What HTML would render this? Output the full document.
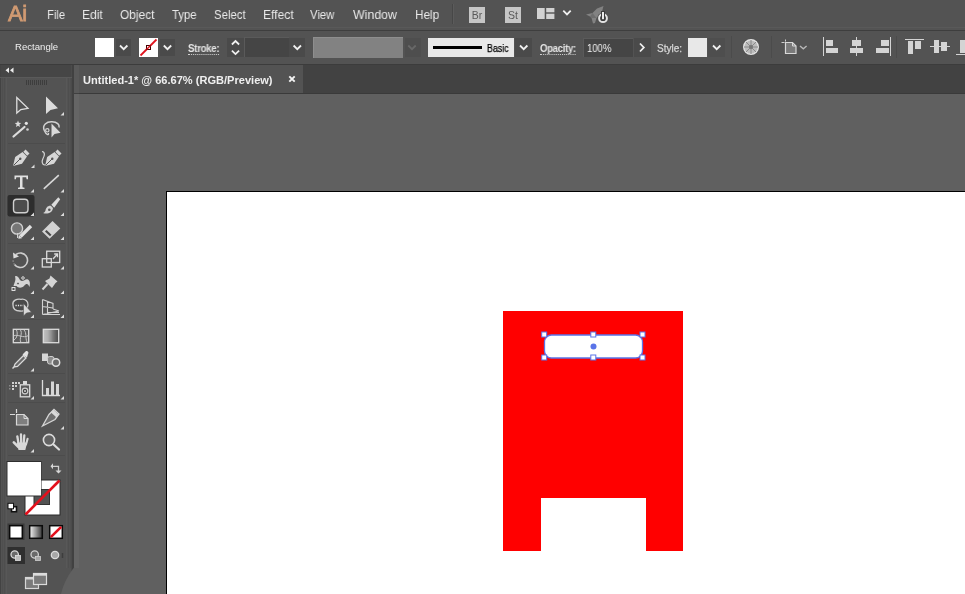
<!DOCTYPE html>
<html><head><meta charset="utf-8">
<style>
html,body{margin:0;padding:0;}
body{width:965px;height:594px;overflow:hidden;position:relative;background:#535353;font-family:"Liberation Sans",sans-serif;color:#e6e6e6;}
.abs{position:absolute;}
.menu,.lbl,.g{will-change:transform;}
#menubar{left:0;top:0;width:965px;height:30px;background:#535353;}
#menuline{left:0;top:30px;width:965px;height:1px;background:#3e3e3e;}
#menuline2{left:0;top:27px;width:965px;height:1px;background:#595959;}
#ctrl{left:0;top:31px;width:965px;height:33px;background:#535353;}
#ctrlline{left:0;top:64px;width:965px;height:1px;background:#3c3c3c;}
.menu{position:absolute;transform-origin:0 0;top:7px;font-size:13px;line-height:15px;color:#e9e9e9;white-space:nowrap;}
.lbl{position:absolute;transform-origin:0 0;top:44px;font-size:9.5px;line-height:12px;color:#e4e4e4;white-space:nowrap;font-weight:bold;letter-spacing:-0.3px}
#tabbar{left:74px;top:65px;width:891px;height:28px;background:#424242;}
#tab{left:74px;top:65px;width:229px;height:28px;background:#535353;}
#tabline{left:74px;top:93px;width:891px;height:1px;background:#3a3a3a;}
#canvas{left:74px;top:94px;width:891px;height:500px;background:#606060;}
#tools{left:0;top:65px;width:72px;height:529px;background:#535353;}
#toolhead{left:0;top:65px;width:72px;height:12px;background:#464646;}
#toolsep{left:72px;top:65px;width:2px;height:529px;background:#414141;box-shadow:-1px 0 0 #4b4b4b;}
#artboard{left:166px;top:191px;width:799px;height:403px;background:#fff;border-left:1px solid #000;border-top:1px solid #000;box-sizing:border-box;}

.btn{position:absolute;background:#4a4a4a;}
.fld{position:absolute;background:#454545;box-shadow:inset 1px 1px 0 #5a5a5a;}
.sw{position:absolute;}
.u{border-bottom:1px dotted #d0d0d0;padding-bottom:0px;line-height:10px}
svg.ic{position:absolute;overflow:visible}
</style></head><body>
<div class="abs" id="menubar"></div>
<div class="abs" id="menuline2"></div>
<div class="abs" id="menuline"></div>
<div class="abs" id="ctrl"></div>
<div class="abs" id="ctrlline"></div>
<div class="abs" id="tabbar"></div>
<div class="abs" id="tab"></div>
<div class="abs" id="tabline"></div>
<div class="abs" id="canvas"></div>
<div class="abs" id="tools"></div>
<div class="abs" id="toolhead"></div>
<div class="abs" id="toolsep"></div>
<div class="abs" style="left:74px;top:65px;width:5px;height:503px;background:rgba(255,255,255,0.035)"></div>
<div class="abs" id="artboard"></div>

<svg class="ic" style="left:288px;top:75px" width="8" height="8" viewBox="0 0 8 8"><path d="M1.300 1.300L6.700 6.700M6.700 1.300L1.300 6.700" stroke="#f4f4f4" stroke-width="1.900"/></svg>
<!-- tools panel -->
<svg class="ic" style="left:0;top:0" width="76" height="594" viewBox="0 0 76 594">
<path d="M74.500 567V594H61C63 585 67 577 72.500 569.500Z" fill="#606060"/>
<rect x="0" y="65" width="1" height="529" fill="#434343"/>
<g shape-rendering="crispEdges"><rect x="2" y="78" width="1" height="516" fill="#4f4f4f"/><rect x="4" y="78" width="1" height="516" fill="#4e4e4e"/><rect x="6" y="78" width="1" height="516" fill="#585858"/><rect x="66" y="78" width="1" height="490" fill="#585858"/><rect x="68" y="78" width="1" height="490" fill="#4e4e4e"/><rect x="70" y="78" width="1" height="490" fill="#4f4f4f"/></g>
<rect x="0" y="77" width="72" height="1" fill="#5a5a5a"/>
<!-- collapse arrows -->
<path d="M9 67.500v5.500l-3.500 -2.750zM13.500 67.500v5.500l-3.500 -2.750z" fill="#ececec"/>
<!-- gripper -->
<g stroke="#3d3d3d" stroke-width="1"><path d="M26.500 80v5M28.500 80v5M30.500 80v5M32.500 80v5M34.500 80v5M36.500 80v5M38.500 80v5M40.500 80v5M42.500 80v5M44.500 80v5M46.500 80v5"/></g>
<!-- separators -->
<g stroke="#4c4c4c" stroke-width="1"><path d="M8 143.500h57M8 243.500h57M8 319.500h57M8 373.500h57M8 402.500h57M8 455.500h57"/></g>
<!-- selected tool bg -->
<rect x="7.500" y="195" width="27" height="21.500" rx="2" fill="#2d2d2d"/>

<!-- selection tool -->
<path d="M16.800 97.500V113L20.800 109.500L28 108.300Z" fill="none" stroke="#dedede" stroke-width="1.300" stroke-linejoin="miter"/>
<!-- direct selection -->
<path d="M46 96.500V114L50.500 110L58 108.300Z" fill="#dcdcdc"/>
<path d="M64 112v3.5h-3.5z" fill="#dcdcdc"/>
<!-- magic wand -->
<path d="M13.500 136.500L24.500 127" stroke="#dcdcdc" stroke-width="2.200" stroke-linecap="round"/>
<path d="M18 120.500l0.900 2.300l2.300 0.300l-1.800 1.500l0.600 2.400l-2 -1.300l-2 1.300l0.600 -2.400l-1.800 -1.500l2.300 -0.300z" fill="#dcdcdc"/>
<circle cx="26.300" cy="123.300" r="1.600" fill="#e4e4e4"/><circle cx="27.500" cy="129.500" r="1.300" fill="#d0d0d0"/>
<!-- lasso -->
<path d="M44.500 131C41.500 125 47 121.500 52 121.800C57 122 60 124.500 59 127.500" fill="none" stroke="#d2d2d2" stroke-width="1.500"/>
<path d="M44.500 131C46 134.500 49 136 48.500 133" fill="none" stroke="#d2d2d2" stroke-width="1.300"/>
<circle cx="47.300" cy="130.300" r="1.700" fill="none" stroke="#d2d2d2" stroke-width="1.200"/>
<path d="M51.500 123.500V137.500L54.500 134L60.500 132.800Z" fill="#d8d8d8"/>
<!-- pen -->
<g>
 <path d="M13 166L15.200 157L22.500 152L27 156.500L22 163.800Z" fill="#d6d6d6"/>
 <path d="M23.300 151.800L25.600 149.500L29.500 153.400L27.200 155.700Z" fill="#d6d6d6"/>
 <path d="M13.500 165.500L20 159" stroke="#555" stroke-width="1"/><circle cx="20.300" cy="158.700" r="1.200" fill="#555"/>
</g>
<path d="M34.5 164.5v3.5h-3.5z" fill="#dcdcdc"/>
<!-- curvature -->
<g transform="translate(32,0)">
 <path d="M13 166L15.200 157L22.500 152L27 156.500L22 163.800Z" fill="#d6d6d6"/>
 <path d="M23.300 151.800L25.600 149.500L29.500 153.400L27.200 155.700Z" fill="#d6d6d6"/>
 <path d="M13.500 165.500L20 159" stroke="#555" stroke-width="1"/><circle cx="20.300" cy="158.700" r="1.200" fill="#555"/>
</g>
<path d="M42 151.500C45.500 152 44.500 156 43 158.500C41.500 161.500 42 165 45 165" fill="none" stroke="#d6d6d6" stroke-width="1.200"/>
<!-- type -->
<path d="M14.500 175.500H28V179.300H26.600L26.200 177.200H22.500V187.300L24.500 187.700V189H18V187.700L20 187.300V177.200H16.300L15.900 179.300H14.500Z" fill="#e0e0e0"/>
<path d="M34 189v3.5h-3.5z" fill="#dcdcdc"/>
<!-- line -->
<path d="M43.800 188.800L58.800 175.200" stroke="#d8d8d8" stroke-width="1.600"/>
<path d="M64 189v3.5h-3.5z" fill="#dcdcdc"/>
<!-- rounded rect -->
<rect x="13.500" y="199.300" width="14.500" height="13.400" rx="3.200" fill="#4c4c4c" stroke="#cfcfcf" stroke-width="1.400"/>
<path d="M34 212.5v3.5h-3.5z" fill="#dcdcdc"/>
<!-- paintbrush -->
<path d="M58.300 197.300L60.200 199.200L54.200 207.700L51.300 204.800Z" fill="#dcdcdc"/>
<path d="M50.800 205.800C47.500 205.500 46 208 45.500 210.500C45 212 44 212.800 43 213C47 214.500 52.500 213 53 208Z" fill="#d4d4d4"/>
<circle cx="49.300" cy="209.800" r="1.300" fill="#555"/>
<path d="M64 212.5v3.5h-3.5z" fill="#dcdcdc"/>
<!-- shaper -->
<circle cx="17" cy="228.500" r="5.600" fill="#767676" stroke="#d0d0d0" stroke-width="1.400"/>
<path d="M20.500 236.500L31 226" stroke="#e0e0e0" stroke-width="3.300"/>
<path d="M18.300 238.800L18.800 235L22 238.200Z" fill="#e0e0e0"/>
<path d="M17.500 233v5" stroke="#cfcfcf" stroke-width="1"/>
<path d="M34 236.5v3.5h-3.5z" fill="#dcdcdc"/>
<!-- eraser -->
<path d="M52.500 221L60.300 228.500L49.500 238.700L42 231.500Z" fill="#d2d2d2"/>
<path d="M46.500 230L51.500 234.800L50 236.200L45 231.400Z" fill="#4a4a4a"/>
<path d="M64 236.5v3.5h-3.5z" fill="#dcdcdc"/>
<!-- rotate -->
<path d="M16 254.500A7.200 7.200 0 1 1 14.500 264.500" fill="none" stroke="#cdcdcd" stroke-width="1.600"/>
<path d="M13 252.500L13.500 258.500L19 256.500Z" fill="#dcdcdc"/>
<path d="M14.500 264.500A7.200 7.200 0 0 1 13.200 259" fill="none" stroke="#8a8a8a" stroke-width="1.300" stroke-dasharray="1.500 1.500"/>
<path d="M34 266v3.5h-3.5z" fill="#dcdcdc"/>
<!-- scale -->
<rect x="46.700" y="251.200" width="13" height="11.300" fill="none" stroke="#dadada" stroke-width="1.300"/>
<rect x="42.300" y="258.700" width="9" height="8.300" fill="none" stroke="#dadada" stroke-width="1.300"/>
<path d="M53 259L57 254.500M54.200 254h3.300v3.300" fill="none" stroke="#dadada" stroke-width="1.300"/>
<path d="M64 266v3.5h-3.5z" fill="#dcdcdc"/>
<!-- width/warp -->
<path d="M13.500 286C15 281 16 280 15 276.500C17.500 275 18.500 278 20 280C23 283 25 278 28 279.500C30.500 281 30 285 29.500 287C28 283.500 26.500 283 24 286C21.500 288.500 18 288 16.500 286Z" fill="#d4d4d4"/>
<circle cx="18" cy="283.500" r="1.500" fill="#666" stroke="#eee" stroke-width=".8"/>
<circle cx="23" cy="278" r="1.300" fill="#666" stroke="#eee" stroke-width=".8"/>
<rect x="12" y="287.500" width="3" height="3" fill="#555" stroke="#eee" stroke-width=".9"/>
<path d="M34 290.5v3.5h-3.5z" fill="#dcdcdc"/>
<!-- pin -->
<path d="M50.500 275.500L57.500 281.500L55.500 283L52 288L45 281L49.500 278.500Z" fill="#d4d4d4"/>
<path d="M47.500 284L42.500 289.500" stroke="#d4d4d4" stroke-width="2"/>
<path d="M64 290.5v3.5h-3.5z" fill="#dcdcdc"/>
<!-- shape builder -->
<path d="M13 305C12 300.500 17 298.500 21 299.300C25 298.500 28.500 301.500 28 305C28 309 24 311.500 20 311C15.500 311 13 308.500 13 305Z" fill="#4a4a4a" stroke="#cfcfcf" stroke-width="1.300"/>
<path d="M15.500 305.500h8" stroke="#e8e8e8" stroke-width="1.300" stroke-dasharray="1.200 1.200"/>
<path d="M23.500 303.500V316L26.500 313L31.500 312.200Z" fill="#d8d8d8" stroke="#535353" stroke-width=".6"/>
<path d="M34 314.5v3.5h-3.5z" fill="#dcdcdc"/>
<!-- perspective grid -->
<path d="M42.500 299.500V314.500M42.500 299.500L53 303.500V309M42.500 306.500L53 308M47.500 301.500V313.500M42.500 314.500L59 311M53 309L59 311M44 314.500H60M48 312.500H59" fill="none" stroke="#d2d2d2" stroke-width="1.100"/>
<path d="M64 314.5v3.5h-3.5z" fill="#dcdcdc"/>
<!-- mesh -->
<rect x="13.300" y="329.300" width="15.400" height="13.400" fill="#5c5c5c" stroke="#dcdcdc" stroke-width="1.300"/>
<path d="M13.500 336C18 333.500 23 339 28.500 335.500M20 329.500C23.500 333 18.500 338.500 21 342.500M14 340C17 338 18 334 16.500 330M24 330C27 333 25 338 27 342" fill="none" stroke="#c6c6c6" stroke-width="1"/>
<!-- gradient -->
<rect x="43.30" y="329.3" width="1.40" height="13.4" fill="#d3d3d3"/><rect x="44.40" y="329.3" width="1.40" height="13.4" fill="#c9c9c9"/><rect x="45.50" y="329.3" width="1.40" height="13.4" fill="#bfbfbf"/><rect x="46.60" y="329.3" width="1.40" height="13.4" fill="#b4b4b4"/><rect x="47.70" y="329.3" width="1.40" height="13.4" fill="#aaaaaa"/><rect x="48.80" y="329.3" width="1.40" height="13.4" fill="#a0a0a0"/><rect x="49.90" y="329.3" width="1.40" height="13.4" fill="#969696"/><rect x="51.00" y="329.3" width="1.40" height="13.4" fill="#8c8c8c"/><rect x="52.10" y="329.3" width="1.40" height="13.4" fill="#828282"/><rect x="53.20" y="329.3" width="1.40" height="13.4" fill="#787878"/><rect x="54.30" y="329.3" width="1.40" height="13.4" fill="#6e6e6e"/><rect x="55.40" y="329.3" width="1.40" height="13.4" fill="#636363"/><rect x="56.50" y="329.3" width="1.40" height="13.4" fill="#595959"/><rect x="57.60" y="329.3" width="1.40" height="13.4" fill="#4f4f4f"/><rect x="43.3" y="329.3" width="15.4" height="13.4" fill="none" stroke="#dcdcdc" stroke-width="1.3"/>
<!-- eyedropper -->
<path d="M14 367L15 364L23.500 355.500L26 358L17.500 366.500Z" fill="#6a6a6a" stroke="#dadada" stroke-width="1.300"/>
<path d="M22.500 354.500L25.500 351.500C27 350 29.500 352.500 28 354L27 357.500Z" fill="#e2e2e2"/>
<path d="M12.500 368.500l1.500 -1.500" stroke="#dadada" stroke-width="1.500"/>
<path d="M34 368v3.5h-3.5z" fill="#dcdcdc"/>
<!-- blend -->
<rect x="42" y="353.500" width="6" height="7.500" fill="#d6d6d6"/>
<rect x="47.500" y="356.500" width="6.500" height="7.500" rx="2" fill="#8c8c8c" stroke="#d0d0d0" stroke-width="1"/>
<circle cx="56" cy="362.500" r="3.700" fill="#6a6a6a" stroke="#dedede" stroke-width="1.500"/>
<!-- symbol sprayer -->
<g fill="#d0d0d0"><rect x="12" y="382" width="2" height="2"/><rect x="15" y="382" width="2" height="2"/><rect x="18" y="382" width="2" height="2"/><rect x="12" y="385" width="2" height="2"/><rect x="15" y="385" width="2" height="2"/><rect x="12" y="388" width="2" height="2"/><rect x="9" y="385" width="1.500" height="1.500" fill="#8a8a8a"/><rect x="9" y="388" width="1.500" height="1.500" fill="#8a8a8a"/></g>
<rect x="20.300" y="384.800" width="9.400" height="12" fill="#5a5a5a" stroke="#dadada" stroke-width="1.300"/>
<rect x="23" y="381" width="4" height="3.500" fill="#dadada"/>
<circle cx="25" cy="391" r="2.800" fill="#444" stroke="#cfcfcf" stroke-width="1.200"/><circle cx="25" cy="391" r="1" fill="#d0d0d0"/>
<path d="M34 396v3.5h-3.5z" fill="#dcdcdc"/>
<!-- graph -->
<path d="M42.500 380V395.500H60" fill="none" stroke="#dcdcdc" stroke-width="1.300"/>
<rect x="46" y="388" width="3" height="7" fill="#d6d6d6"/><rect x="51" y="381.500" width="3" height="13.500" fill="#d6d6d6"/><rect x="56" y="384" width="3" height="11" fill="#d6d6d6"/>
<path d="M64 396v3.5h-3.5z" fill="#dcdcdc"/>
<!-- artboard -->
<path d="M16.500 414.500H24L28 418.500V425H16.500Z" fill="#7e7e7e" stroke="#dadada" stroke-width="1.200"/>
<path d="M24 414.500V418.500H28" fill="none" stroke="#dadada" stroke-width="1"/>
<path d="M10 414.500H15M16.500 409V413" stroke="#dadada" stroke-width="1.200"/>
<!-- slice -->
<path d="M42.500 426L49 414.500L54 409.500L59 414L55 419.500Z" fill="#6e6e6e" stroke="#d6d6d6" stroke-width="1.300"/>
<path d="M53.500 410L58.500 414.500L56.500 417.500L51 412.500Z" fill="#d8d8d8"/>
<path d="M64 426v3.5h-3.5z" fill="#dcdcdc"/>
<!-- hand -->
<g stroke="#d8d8d8" stroke-linecap="round" fill="none"><path d="M18.600 444L17.300 436.300" stroke-width="2.300"/><path d="M21.200 443L21 434.500" stroke-width="2.300"/><path d="M23.700 443L24.300 435.500" stroke-width="2.300"/><path d="M26 444.500L27.600 438.800" stroke-width="2.100"/><path d="M18.500 447L13.800 442.300" stroke-width="2.600"/></g>
<path d="M16.800 442.500L27.200 442.500L25.300 450L18.500 450Z" fill="#d8d8d8"/>
<path d="M34 449v3.5h-3.5z" fill="#dcdcdc"/>
<!-- zoom -->
<circle cx="49" cy="440" r="5.600" fill="#616161" stroke="#dcdcdc" stroke-width="1.600"/>
<path d="M53.300 444.300L59 449.500" stroke="#dcdcdc" stroke-width="2.200" stroke-linecap="round"/>

<!-- stroke swatch -->
<rect x="25" y="480" width="35" height="35" fill="#fff" stroke="#2a2a2a" stroke-width="1"/>
<rect x="34" y="489.500" width="15.500" height="15" fill="#535353" stroke="#333" stroke-width="1"/>
<path d="M25.500 514.500L59.500 480.500" stroke="#e3101c" stroke-width="2.600"/>
<!-- fill swatch -->
<rect x="6.500" y="461" width="35" height="35.500" fill="#2e2e2e"/>
<rect x="7.500" y="462" width="33.500" height="33.500" fill="#fff"/>
<!-- swap -->
<path d="M52.500 466.300H58.500V471.500" fill="none" stroke="#cfcfcf" stroke-width="1.300"/>
<path d="M53 463.300V469.300L50.500 466.300ZM55.500 470.500H61.500L58.500 473.500Z" fill="#d6d6d6"/>
<!-- default -->
<rect x="11.500" y="506.700" width="5" height="5" fill="#fff" stroke="#111" stroke-width="1.600"/>
<rect x="8" y="503.300" width="5.500" height="5.500" fill="#fff" stroke="#111" stroke-width="1"/>
<!-- color mode -->
<rect x="7.500" y="523.500" width="17" height="16.500" fill="#3a3a3a"/>
<rect x="9.700" y="525.700" width="12.600" height="12.600" fill="#fff" stroke="#0a0a0a" stroke-width="1.500"/>
<rect x="29.70" y="525.7" width="1.35" height="12.6" fill="#ececec"/><rect x="30.75" y="525.7" width="1.35" height="12.6" fill="#dddddd"/><rect x="31.80" y="525.7" width="1.35" height="12.6" fill="#cdcdcd"/><rect x="32.85" y="525.7" width="1.35" height="12.6" fill="#bebebe"/><rect x="33.90" y="525.7" width="1.35" height="12.6" fill="#aeaeae"/><rect x="34.95" y="525.7" width="1.35" height="12.6" fill="#9f9f9f"/><rect x="36.00" y="525.7" width="1.35" height="12.6" fill="#8f8f8f"/><rect x="37.05" y="525.7" width="1.35" height="12.6" fill="#808080"/><rect x="38.10" y="525.7" width="1.35" height="12.6" fill="#707070"/><rect x="39.15" y="525.7" width="1.35" height="12.6" fill="#616161"/><rect x="40.20" y="525.7" width="1.35" height="12.6" fill="#515151"/><rect x="41.25" y="525.7" width="1.35" height="12.6" fill="#424242"/><rect x="29.7" y="525.7" width="12.6" height="12.6" fill="none" stroke="#0a0a0a" stroke-width="1.5"/>
<rect x="49.700" y="525.700" width="12.600" height="12.600" fill="#fff" stroke="#0a0a0a" stroke-width="1.500"/>
<path d="M50.800 537.200L61.200 526.800" stroke="#e3101c" stroke-width="2.600"/>
<!-- draw modes -->
<rect x="7.500" y="547" width="17.500" height="17" fill="#2f2f2f"/>
<circle cx="14.700" cy="554.500" r="3.700" fill="#6a6a6a" stroke="#d8d8d8" stroke-width="1.300"/>
<rect x="15.500" y="555.500" width="5" height="5" fill="#bdbdbd" stroke="#e0e0e0" stroke-width=".8"/>
<circle cx="34.700" cy="554.500" r="3.700" fill="#6a6a6a" stroke="#cfcfcf" stroke-width="1.300"/>
<rect x="35.500" y="556.500" width="5" height="4" fill="#a8a8a8" stroke="#cfcfcf" stroke-width=".8"/>
<circle cx="55" cy="555" r="3.700" fill="#a8a8a8" stroke="#dcdcdc" stroke-width="1.300"/>
<path d="M62.500 553v5" stroke="#3d3d3d" stroke-width="1.500"/>
<!-- screen mode -->
<rect x="25.500" y="577.500" width="13" height="11" fill="#7a7a7a" stroke="#d6d6d6" stroke-width="1.200"/>
<rect x="25.500" y="577.500" width="13" height="2" fill="#d6d6d6"/>
<rect x="33.500" y="573.500" width="13" height="11" fill="#7a7a7a" stroke="#dcdcdc" stroke-width="1.200"/>
<rect x="33.500" y="573.500" width="13" height="2.200" fill="#dcdcdc"/>
</svg>
<!-- artwork -->
<svg class="abs" style="left:0;top:0" width="965" height="594" viewBox="0 0 965 594">
  <path d="M503 311H683V551H646V498H541V551H503Z" fill="#ff0000"/>
  <rect x="544.5" y="335" width="98" height="23" rx="7" ry="7" fill="#fff" stroke="#5a74e8" stroke-width="1.3"/>
  <circle cx="593.5" cy="346.5" r="3" fill="#5a74e8"/>
  <g fill="#fff" stroke="#5a74e8" stroke-width="1">
    <rect x="541.7" y="332" width="5" height="5"/>
    <rect x="590.8" y="332" width="5" height="5"/>
    <rect x="640" y="332" width="5" height="5"/>
    <rect x="541.7" y="355" width="5" height="5"/>
    <rect x="590.8" y="355" width="5" height="5"/>
    <rect x="640" y="355" width="5" height="5"/>
  </g>
</svg>


<!-- control bar widgets -->
<div class="sw" style="left:95px;top:38px;width:19px;height:19px;background:#fff"></div>
<div class="btn" style="left:116px;top:39px;width:15px;height:17px"></div>
<div class="sw" style="left:139px;top:38px;width:19px;height:19px;background:#fff;overflow:hidden">
  <svg width="19" height="19" viewBox="0 0 19 19"><path d="M1.500 17.500L17.500 1.500" stroke="#e0141e" stroke-width="1.800"/><rect x="7.500" y="7.500" width="4" height="4" fill="#fff" stroke="#400" stroke-width="1"/><path d="M7.500 11.500l4 -4" stroke="#e0141e" stroke-width="1.500"/></svg>
</div>
<div class="btn" style="left:160px;top:39px;width:15px;height:17px"></div>
<div class="btn" style="left:227px;top:38px;width:17px;height:19px"></div>
<div class="fld" style="left:244px;top:37px;width:45px;height:20px"></div>
<div class="btn" style="left:289px;top:38px;width:16px;height:19px"></div>
<div class="abs" style="left:313px;top:37px;width:90px;height:21px;background:#828282;box-shadow:inset 1px 1px 0 #8e8e8e"></div>
<div class="btn" style="left:405px;top:38px;width:16px;height:19px;background:#4e4e4e"></div>
<div class="abs" style="left:428px;top:38px;width:86px;height:19px;background:#e8e8e8"></div>
<div class="abs" style="left:433px;top:46px;width:49px;height:3px;background:#000"></div>
<div class="abs g" style="left:486.700px;top:43px;font-size:10px;line-height:12px;color:#000;white-space:nowrap;transform-origin:0 0;transform:scaleX(.88);-webkit-text-stroke:0.250px #000">Basic</div>
<div class="btn" style="left:515px;top:38px;width:17px;height:19px"></div>
<div class="fld" style="left:583px;top:38px;width:50px;height:19px"></div>
<div class="abs g" style="left:586.500px;top:43px;font-size:10px;line-height:12px;color:#f0f0f0;white-space:nowrap;transform-origin:0 0;transform:scaleX(.95)">100%</div>
<div class="btn" style="left:634px;top:38px;width:17px;height:19px"></div>
<div class="sw" style="left:688px;top:38px;width:19px;height:19px;background:#e8e8e8"></div>
<div class="btn" style="left:708px;top:38px;width:17px;height:19px;background:#4e4e4e"></div>
<svg class="ic" style="left:0;top:0" width="965" height="70" viewBox="0 0 965 70" fill="none" stroke="#f0f0f0" stroke-width="1.800">
  <path d="M120 45.500l3.700 3.700l3.700 -3.700"/>
  <path d="M163.800 45.500l3.700 3.700l3.700 -3.700"/>
  <path d="M293.600 45.500l3.700 3.700l3.700 -3.700"/>
  <path d="M408.300 45.500l3.700 3.700l3.700 -3.700" stroke="#686868"/>
  <path d="M520 45.500l3.700 3.700l3.700 -3.700"/>
  <path d="M713 45.500l3.700 3.700l3.700 -3.700"/>
  <path d="M231.900 44.500l3.600 -3.400l3.600 3.400M231.900 50.700l3.600 3.400l3.600 -3.400"/>
  <path d="M640 43.500l3.800 4l-3.800 4"/>
  <path d="M563.300 10.700l3.700 3.700l3.700 -3.700"/>
  <path d="M800 46l3.300 2.800l3.300 -2.800" stroke="#b8b8b8" stroke-width="1.400"/>
</svg>

<!-- menubar icons -->
<div class="abs" style="left:452px;top:4px;width:1px;height:20px;background:#474747"></div>
<div class="abs" style="left:453px;top:4px;width:1px;height:20px;background:#5b5b5b"></div>
<div class="abs g" style="left:469px;top:7px;width:16px;height:16px;background:#c6c6c6;color:#595959;font-size:10.500px;line-height:17px;text-align:center;font-weight:normal;letter-spacing:0">Br</div>
<div class="abs g" style="left:505px;top:7px;width:16px;height:16px;background:#c6c6c6;color:#595959;font-size:10.500px;line-height:17px;text-align:center;font-weight:normal;letter-spacing:0">St</div>
<svg class="ic" style="left:536.800px;top:8px" width="18" height="12" viewBox="0 0 18 12"><rect x="0" y="0" width="7.700" height="11" fill="#d2d2d2"/><rect x="9.200" y="0" width="8.200" height="4.300" fill="#d2d2d2"/><rect x="9.200" y="5.700" width="8.200" height="5.300" fill="#d2d2d2"/></svg>
<svg class="ic" style="left:585px;top:3px" width="26" height="24" viewBox="0 0 26 24">
  <path d="M18.500 3L12 5.500L7.500 10L1 11.500L5 13.500L6.500 15L8 20.500L10 20L11.500 15L16.500 10.500Z" fill="#828282"/>
  <path d="M7.500 10L5 13.500L6.500 15L11.500 15Z" fill="#6e6e6e"/>
  <circle cx="18" cy="15.200" r="5.600" fill="#535353"/>
  <circle cx="18" cy="15.200" r="3.900" fill="#3c3c3c" stroke="#e4e4e4" stroke-width="2"/>
  <rect x="16" y="8" width="4" height="8.500" fill="#3c3c3c"/>
  <rect x="17" y="9" width="2" height="7.200" fill="#ececec"/>
</svg>

<!-- control bar right -->
<div class="abs" style="left:731px;top:36px;width:1px;height:22px;background:#4b4b4b"></div>
<div class="abs" style="left:771px;top:36px;width:1px;height:22px;background:#4b4b4b"></div>
<svg class="ic" style="left:742px;top:38px" width="18" height="18" viewBox="0 0 18 18">
  <circle cx="9" cy="9" r="7.300" fill="#bdbdbd" stroke="#e2e2e2" stroke-width="1.400"/>
  <g stroke="#8a8a8a" stroke-width="1"><path d="M9 2v14M2 9h14M4 4l10 10M14 4L4 14"/></g>
  <circle cx="9" cy="9" r="2" fill="#777"/>
</svg>
<svg class="ic" style="left:780px;top:38px" width="22" height="18" viewBox="0 0 22 18">
  <path d="M5.500 4.500h7l3.500 3.500v7.500h-10.500z" fill="#7a7a7a" stroke="#d8d8d8" stroke-width="1.200"/>
  <path d="M12.500 4.500v3.500h3.500" fill="none" stroke="#d8d8d8" stroke-width="1"/>
  <path d="M1.500 4.500h3M5.500 1.500v2" stroke="#cfcfcf" stroke-width="1"/>
</svg>
<svg class="ic" style="left:0;top:0" width="965" height="70" viewBox="0 0 965 70" shape-rendering="crispEdges">
 <g fill="#d4d4d4">
  <rect x="823" y="37" width="1" height="19"/><rect x="826" y="40" width="7" height="6"/><rect x="826" y="48" width="12" height="5"/>
  <rect x="856" y="37" width="1" height="19"/><rect x="852" y="40" width="9" height="6"/><rect x="850" y="48" width="13" height="5"/>
  <rect x="890" y="37" width="1" height="19"/><rect x="881" y="40" width="8" height="6"/><rect x="876" y="48" width="13" height="5"/>
  <rect x="905" y="39" width="19" height="1"/><rect x="908" y="41" width="5" height="13"/><rect x="915" y="41" width="6" height="8"/>
  <rect x="930" y="46" width="20" height="1"/><rect x="934" y="40" width="5" height="13"/><rect x="941" y="42" width="6" height="9"/>
  <rect x="956" y="54" width="9" height="1"/><rect x="960" y="40" width="5" height="13"/>
 </g>
 <rect x="896" y="36" width="1" height="22" fill="#4b4b4b"/>
</svg>
<!-- menu -->
<div class="abs g" style="left:8.200px;top:-0.5px;font-size:22px;line-height:28px;color:#d09a72;letter-spacing:-0.5px;-webkit-text-stroke:0.800px #d09a72;">Ai</div>
<div class="menu" style="left:46.8px;transform:scaleX(0.865)">File</div>
<div class="menu" style="left:82.4px;transform:scaleX(0.925)">Edit</div>
<div class="menu" style="left:119.8px;transform:scaleX(0.917)">Object</div>
<div class="menu" style="left:171.5px;transform:scaleX(0.87)">Type</div>
<div class="menu" style="left:213.8px;transform:scaleX(0.875)">Select</div>
<div class="menu" style="left:263.4px;transform:scaleX(0.926)">Effect</div>
<div class="menu" style="left:309.6px;transform:scaleX(0.87)">View</div>
<div class="menu" style="left:352.6px;transform:scaleX(0.95)">Window</div>
<div class="menu" style="left:414.5px;transform:scaleX(0.905)">Help</div>

<div class="lbl" style="left:14.600px;top:41px;font-weight:normal;letter-spacing:0;color:#efefef;transform:scaleX(1.01)">Rectangle</div>
<div class="lbl u" style="left:188.300px;top:43.500px;font-size:10px;transform:scaleX(.97)">Stroke:</div>
<div class="lbl u" style="left:540.300px;top:43.500px;font-size:10px;transform:scaleX(.955)">Opacity:</div>
<div class="lbl" style="left:656.500px;top:43px;font-size:10px;font-weight:normal;color:#d6d6d6;letter-spacing:0;transform:scaleX(1.0);-webkit-text-stroke:0.250px #d6d6d6">Style:</div>

<div class="abs g" style="left:83px;top:74px;font-size:11px;line-height:13px;font-weight:bold;color:#f0f0f0;white-space:nowrap;transform-origin:0 0;transform:scaleX(1.005)">Untitled-1* @ 66.67% (RGB/Preview)</div>

</body></html>
